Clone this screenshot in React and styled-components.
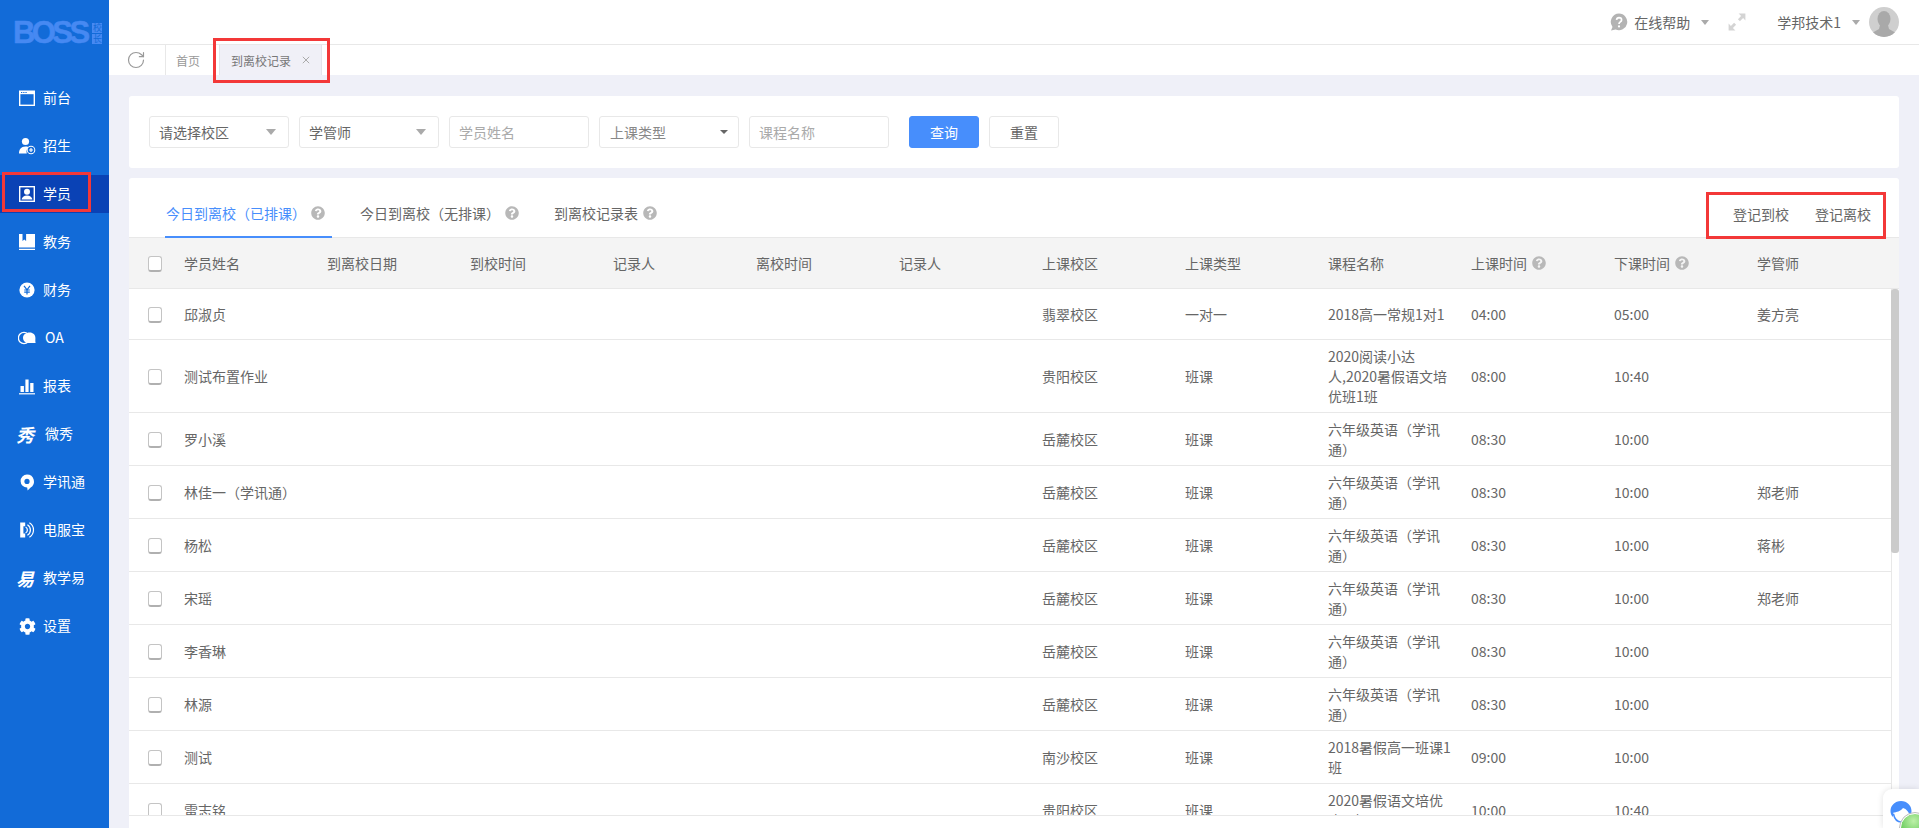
import React from "react";
import styled, { createGlobalStyle } from "styled-components";
import { FaCog, FaQuestionCircle } from "react-icons/fa";
import { RotateCw } from "lucide-react";

const GlobalStyle = createGlobalStyle`
  html, body {
    margin: 0;
    padding: 0;
    height: 100%;
    overflow: hidden;
  }
  body {
    font-family: "Noto Sans CJK SC", "Noto Sans", sans-serif;
    font-size: 14px;
    color: #666;
  }
  * {
    box-sizing: border-box;
  }
`;

const NAV = [
  { key: "front", label: "前台" },
  { key: "enroll", label: "招生" },
  { key: "student", label: "学员", active: true },
  { key: "teach", label: "教务" },
  { key: "money", label: "财务" },
  { key: "oa", label: "OA", shifted: true },
  { key: "report", label: "报表" },
  { key: "show", label: "微秀", shifted: true },
  { key: "xun", label: "学讯通" },
  { key: "phone", label: "电服宝" },
  { key: "easy", label: "教学易" },
  { key: "setting", label: "设置" },
];

const COLUMNS = [
  { label: "学员姓名" },
  { label: "到离校日期" },
  { label: "到校时间" },
  { label: "记录人" },
  { label: "离校时间" },
  { label: "记录人" },
  { label: "上课校区" },
  { label: "上课类型" },
  { label: "课程名称" },
  { label: "上课时间", help: true },
  { label: "下课时间", help: true },
  { label: "学管师" },
];

const XUN = "六年级英语（学讯通）";

const ROWS = [
  ["邱淑贞", "翡翠校区", "一对一", "2018高一常规1对1", "04:00", "05:00", "姜方亮"],
  ["测试布置作业", "贵阳校区", "班课", "2020阅读小达人,2020暑假语文培优班1班", "08:00", "10:40", ""],
  ["罗小溪", "岳麓校区", "班课", XUN, "08:30", "10:00", ""],
  ["林佳一（学讯通）", "岳麓校区", "班课", XUN, "08:30", "10:00", "郑老师"],
  ["杨松", "岳麓校区", "班课", XUN, "08:30", "10:00", "蒋彬"],
  ["宋瑶", "岳麓校区", "班课", XUN, "08:30", "10:00", "郑老师"],
  ["李香琳", "岳麓校区", "班课", XUN, "08:30", "10:00", ""],
  ["林源", "岳麓校区", "班课", XUN, "08:30", "10:00", ""],
  ["测试", "南沙校区", "班课", "2018暑假高一班课1班", "09:00", "10:00", ""],
  ["雷志铭", "贵阳校区", "班课", "2020暑假语文培优班1班", "10:00", "10:40", ""],
];

const Glyph = ({ children }) => (
  <svg width="18" height="18" viewBox="0 0 18 18" fill="none">
    {children}
  </svg>
);

const BLUE = "#126bd8";

const NavIcon = ({ name }) => {
  switch (name) {
    case "front":
      return (
        <Glyph>
          <path d="M1 1.500h16v15.500H1z" fill="#fff" />
          <path d="M2.400 5.200h13.200v10.400H2.400z" fill={BLUE} />
          <path d="M3 3h1.300v1H3zM5.200 3h1.300v1H5.200zM7.400 3h1.300v1H7.400z" fill={BLUE} />
        </Glyph>
      );
    case "enroll":
      return (
        <Glyph>
          <circle cx="7.500" cy="4.500" r="3.600" fill="#fff" />
          <path d="M1 16.500c0-4 2-7 6.500-7 1.600 0 2.800.4 3.700 1a5 5 0 0 0-2.400 6H1z" fill="#fff" />
          <circle cx="13" cy="13" r="4.300" fill="#fff" />
          <circle cx="13" cy="13" r="3.300" fill={BLUE} />
          <path d="M13 11v4M11 13h4" stroke="#fff" strokeWidth="1.200" />
        </Glyph>
      );
    case "student":
      return (
        <Glyph>
          <path d="M1 1h16v16H1z" fill="#fff" />
          <path d="M2.400 2.400h13.200v13.200H2.400z" fill="#0a42b5" />
          <circle cx="9" cy="6.800" r="3" fill="#fff" />
          <path d="M3.600 14.600c.3-2.600 2.200-4.200 5.400-4.200s5.100 1.600 5.400 4.200z" fill="#fff" />
        </Glyph>
      );
    case "teach":
      return (
        <Glyph>
          <path d="M1 1h16v13.600H1zM1 15.800h16V17H1z" fill="#fff" />
          <path d="M4.500 1h3.600v7L6.300 6.400 4.500 8z" fill={BLUE} />
        </Glyph>
      );
    case "money":
      return (
        <Glyph>
          <circle cx="9" cy="9" r="7.600" fill="#fff" />
          <path d="M6 4.800l3 4 3-4M9 8.800v4.600M6.200 9h5.600M6.200 11.200h5.600" stroke={BLUE} strokeWidth="1.200" />
        </Glyph>
      );
    case "oa":
      return (
        <Glyph>
          <circle cx="6" cy="9" r="5.600" stroke="#fff" strokeWidth="1.300" />
          <path d="M11.800 3.600c3.200 0 5.600 2.300 5.600 5.300 0 1.400-.2 3.300.2 5H8.600C6.500 12.900 5 11.200 5 9c0-3 2.800-5.400 6.800-5.400z" fill="#fff" />
        </Glyph>
      );
    case "report":
      return (
        <Glyph>
          <path d="M2.500 9h3.400v6H2.500zM7.400 2.500h3.200V15H7.400zM12.200 6h3.300v9h-3.300z" fill="#fff" />
          <path d="M1 16.200h16v1.200H1z" fill="#fff" />
        </Glyph>
      );
    case "xun":
      return (
        <Glyph>
          <path d="M9 1.600a7 7 0 0 1 3.400 13.100L9.600 17.400l-.4-2.800A6.500 6.500 0 0 1 9 1.600z" fill="#fff" />
          <circle cx="9" cy="8.400" r="2.600" fill={BLUE} />
        </Glyph>
      );
    case "phone":
      return (
        <Glyph>
          <path d="M2.200 1.600h5v3.600H5.400v7.400h1.800v3.800h-5z" fill="#fff" />
          <path d="M7.600 6a3.400 3.400 0 0 1 0 6" stroke="#fff" strokeWidth="1.200" />
          <path d="M9.400 3.800a6 6 0 0 1 0 10.400" stroke="#fff" strokeWidth="1.200" />
          <path d="M11.400 1.800a8.400 8.400 0 0 1 0 14.400" stroke="#fff" strokeWidth="1.200" />
        </Glyph>
      );
    case "setting":
      return <FaCog size={17} color="#fff" />;
    default:
      return null;
  }
};

const HelpBubble = () => (
  <svg width="18" height="18" viewBox="0 0 18 18">
    <path d="M9 .6a8.300 8.300 0 1 1-3.400 15.900L1 17.600l1.500-3.700A8.300 8.300 0 0 1 9 .6z" fill="#b3b3b3" />
    <path d="M6.500 6.800A2.600 2.600 0 0 1 9 4.600c1.500 0 2.600 1 2.600 2.300 0 2-2.600 2-2.600 4" fill="none" stroke="#fff" strokeWidth="1.700" />
    <circle cx="9" cy="13.400" r="1.100" fill="#fff" />
  </svg>
);

const ExpandIcon = () => (
  <svg width="18" height="18" viewBox="0 0 18 18" fill="#d4d4d4">
    <path d="M10.600.6h6.800v6.800l-2.300-2.300-3.200 3.200-2-2 3.200-3.200zM7.400 17.400H.6v-6.800l2.300 2.300 3.200-3.200 2 2-3.200 3.200z" />
  </svg>
);

const Caret = styled.i`
  display: block;
  width: 0;
  height: 0;
  flex: none;
  border-left: ${(p) => (p.$small ? 4 : 5)}px solid transparent;
  border-right: ${(p) => (p.$small ? 4 : 5)}px solid transparent;
  border-top: ${(p) => (p.$small ? 4 : 6)}px solid ${(p) => (p.$dark ? "#666" : "#aaa")};
`;

const TopCaret = styled(Caret)`
  border-left-width: 4.5px;
  border-right-width: 4.5px;
  border-top-width: 5px;
  margin-left: ${(p) => p.$offset || 0}px;
`;

const Page = styled.div`
  display: flex;
  width: 100%;
  height: 100vh;
  overflow: hidden;
  background: #eff0f8;
`;

const Sidebar = styled.aside`
  width: 109px;
  flex: none;
  background: ${BLUE};
`;

const Logo = styled.div`
  display: flex;
  height: 79px;
  padding: 15px 0 0 13px;
`;

const LogoWord = styled.span`
  font-family: "Liberation Sans", Arial, sans-serif;
  font-weight: 700;
  font-size: 31px;
  line-height: 36px;
  letter-spacing: -3.6px;
  color: #4689f2;
  -webkit-text-stroke: 0.5px #4689f2;
`;

const LogoMarks = styled.span`
  display: flex;
  flex-direction: column;
  gap: 1px;
  margin: 8px 0 0 6px;
`;

const LogoMark = styled.span`
  width: 10px;
  height: 10px;
  background: #4689f2;
  color: ${BLUE};
  font-size: 9px;
  line-height: 10px;
  text-align: center;
`;

const NavList = styled.nav`
  display: flex;
  flex-direction: column;
  gap: 10px;
`;

const NavItem = styled.a`
  position: relative;
  display: flex;
  align-items: center;
  height: 38px;
  padding-left: 18px;
  gap: ${(p) => (p.$shifted ? 9 : 7)}px;
  color: #fff;
  background: ${(p) => (p.$active ? "#0a42b5" : "transparent")};
`;

const NavLabel = styled.span`
  padding-bottom: 2px;
`;

const NavIconBox = styled.span`
  display: flex;
  align-items: center;
  justify-content: center;
  width: 18px;
  height: 18px;
`;

const NavCharIcon = styled.span`
  font-size: 18px;
  font-weight: 700;
  line-height: 18px;
  color: #fff;
  transform: skewX(-14deg);
`;

const RedBox = styled.span`
  position: absolute;
  z-index: 5;
  border: 3px solid #f33838;
  pointer-events: none;
`;

const NavRedBox = styled(RedBox)`
  top: -3px;
  left: 2px;
  width: 89px;
  height: 40px;
`;

const TabRedBox = styled(RedBox)`
  top: -7px;
  left: -7px;
  width: 117px;
  height: 45px;
`;

const ActionRedBox = styled(RedBox)`
  top: 2px;
  left: -27px;
  width: 180px;
  height: 47px;
`;

const Main = styled.div`
  flex: 1;
  min-width: 0;
  display: flex;
  flex-direction: column;
`;

const TopBar = styled.header`
  display: flex;
  align-items: center;
  justify-content: flex-end;
  height: 45px;
  padding-right: 20px;
  background: #fff;
  border-bottom: 1px solid #e8e8e8;
`;

const TopItem = styled.div`
  display: flex;
  align-items: center;
  gap: ${(p) => p.$gap || 0}px;
`;

const HelpGroup = styled(TopItem)`
  margin-right: 19px;
`;

const ExpandBox = styled.span`
  display: flex;
  margin-right: 31px;
`;

const Avatar = styled.span`
  display: block;
  width: 30px;
  height: 30px;
  border-radius: 50%;
  overflow: hidden;
  background: #cfcfcf;
`;

const TabBar = styled.div`
  display: flex;
  gap: 9px;
  height: 30px;
  background: #fff;
`;

const RefreshCell = styled.div`
  display: flex;
  align-items: center;
  justify-content: center;
  width: 57px;
  padding-right: 2px;
  color: #999;
  border-right: 1px solid #e8e8e8;
`;

const PageTab = styled.div`
  position: relative;
  display: flex;
  align-items: center;
  gap: 11px;
  padding: 0 ${(p) => (p.$active ? 11 : 10)}px;
  margin-left: ${(p) => (p.$active ? 0 : -9)}px;
  font-size: 12px;
  color: ${(p) => (p.$active ? "#777" : "#999")};
  background: ${(p) => (p.$active ? "#f0f0f7" : "#fff")};
  border-right: ${(p) => (p.$active ? "1px solid #e4e4ea" : "none")};
  border-left: ${(p) => (p.$active ? "1px solid #e4e4ea" : "none")};
`;

const Content = styled.main`
  flex: 1;
  min-height: 0;
  display: flex;
  flex-direction: column;
  gap: 10px;
  padding: 21px 20px 0;
`;

const FilterCard = styled.section`
  display: flex;
  gap: 10px;
  height: 72px;
  padding: 20px;
  background: #fff;
  border-radius: 3px;
`;

const Field = styled.div`
  display: flex;
  align-items: center;
  justify-content: space-between;
  width: 140px;
  height: 32px;
  padding: 0 ${(p) => (p.$dark ? 10 : 12)}px 0 ${(p) => (p.$dark ? 10 : 9)}px;
  border: 1px solid #e8e8e8;
  border-radius: 3px;
  color: ${(p) => (p.$muted ? "#888" : "#666")};
`;

const TextField = styled.input`
  width: 140px;
  height: 32px;
  padding: 0 9px;
  border: 1px solid #e8e8e8;
  border-radius: 3px;
  outline: none;
  font: inherit;
  color: #666;
  &::placeholder {
    color: #aaa;
    opacity: 1;
  }
`;

const Button = styled.button`
  width: 70px;
  height: 32px;
  padding: 0;
  font: inherit;
  border-radius: 3px;
  border: 1px solid ${(p) => (p.$primary ? "#478efc" : "#e8e8e8")};
  background: ${(p) => (p.$primary ? "#478efc" : "#fff")};
  color: ${(p) => (p.$primary ? "#fff" : "#666")};
  margin-left: ${(p) => (p.$primary ? 10 : 0)}px;
`;

const TableCard = styled.section`
  flex: 1;
  min-height: 0;
  display: flex;
  flex-direction: column;
  background: #fff;
  border-radius: 3px 3px 0 0;
`;

const TabsRow = styled.div`
  flex: none;
  display: flex;
  justify-content: space-between;
  height: 60px;
  padding: 12px 28px 0 36px;
  border-bottom: 1px solid #e8e8e8;
`;

const Tabs = styled.div`
  display: flex;
  gap: 27px;
`;

const Tab = styled.div`
  display: flex;
  align-items: center;
  gap: 5px;
  height: 48px;
  padding: 0 7px 0 1px;
  color: ${(p) => (p.$active ? "#478efc" : "#666")};
  border-bottom: 2px solid ${(p) => (p.$active ? "#478efc" : "transparent")};
`;

const HelpDot = styled(FaQuestionCircle)`
  flex: none;
  width: 14px;
  height: 14px;
  color: #b8b8b8;
`;

const Actions = styled.div`
  position: relative;
  display: flex;
  align-items: center;
  gap: 26px;
  height: 47px;
`;

const TableGrid = styled.div`
  display: grid;
  grid-template-columns: 46px repeat(12, 143px);
  align-items: center;
`;

const HeadRow = styled(TableGrid)`
  flex: none;
  height: 51px;
  background: #f4f4f4;
  border-bottom: 1px solid #e8e8e8;
`;

const BodyWrap = styled.div`
  flex: 1;
  min-height: 0;
  display: flex;
  margin-bottom: 12px;
  overflow: hidden;
  border-bottom: 1px solid #e8e8e8;
`;

const BodyRows = styled.div`
  width: 1762px;
  flex: none;
`;

const BodyRow = styled(TableGrid)`
  min-height: 51px;
  padding: 6px 0;
  border-bottom: 1px solid #e8e8e8;
`;

const CheckCell = styled.div`
  display: flex;
  padding: 1px 0 0 19px;
`;

const CheckBox = styled.span`
  display: block;
  width: 14px;
  height: 16px;
  background: #fff;
  border: 1px solid #c4c4c4;
  border-bottom: 2px solid #b0b0b0;
  border-radius: 3px;
`;

const Cell = styled.div`
  display: flex;
  align-items: center;
  gap: 5px;
  padding: 0 10px 0 9px;
  line-height: 20px;
  grid-column: ${(p) => p.$column || "auto"};
`;

const Track = styled.div`
  flex: 1;
  border-left: 1px solid #e8e8e8;
`;

const Thumb = styled.div`
  width: 8px;
  height: 264px;
  margin-left: -1px;
  background: #cbcbcb;
  border-radius: 3px;
`;

const ChatWidget = styled.div`
  position: fixed;
  right: 0;
  bottom: 0;
  width: 36px;
  height: 39px;
  overflow: hidden;
  background: #fff;
  border-radius: 9px 0 0 0;
  box-shadow: 0 0 6px rgba(0, 0, 0, 0.12);
`;

const ChatFace = styled.svg`
  display: block;
  margin: 12px 0 0 7px;
`;

const ChatBall = styled.span`
  position: absolute;
  left: 17px;
  top: 24px;
  width: 30px;
  height: 30px;
  border-radius: 50%;
  border: 1px solid #fff;
  outline: 1px solid #bbb;
  background: radial-gradient(circle at 45% 25%, #bdf0a8, #55c24a 70%);
`;

const App = () => {
  return (
    <Page>
      <GlobalStyle />
      <Sidebar>
        <Logo>
          <LogoWord>BOSS</LogoWord>
          <LogoMarks>
            <LogoMark>校</LogoMark>
            <LogoMark>长</LogoMark>
          </LogoMarks>
        </Logo>
        <NavList>
          {NAV.map((item) => (
            <NavItem key={item.key} $active={item.active} $shifted={item.shifted}>
              <NavIconBox>
                {item.key === "show" && <NavCharIcon>秀</NavCharIcon>}
                {item.key === "easy" && <NavCharIcon>易</NavCharIcon>}
                <NavIcon name={item.key} />
              </NavIconBox>
              <NavLabel>{item.label}</NavLabel>
              {item.active && <NavRedBox />}
            </NavItem>
          ))}
        </NavList>
      </Sidebar>

      <Main>
        <TopBar>
          <HelpGroup $gap={6}>
            <HelpBubble />
            在线帮助
            <TopCaret $offset={5} />
          </HelpGroup>
          <ExpandBox>
            <ExpandIcon />
          </ExpandBox>
          <TopItem $gap={9}>
            学邦技术1
            <TopCaret $offset={2} />
            <Avatar>
              <svg width="30" height="30" viewBox="0 0 30 30">
                <ellipse cx="15" cy="12" rx="6.500" ry="8" fill="#a9a9a9" />
                <path d="M11 18h8l1 4 7 4v4H3v-4l7-4z" fill="#a9a9a9" />
              </svg>
            </Avatar>
          </TopItem>
        </TopBar>

        <TabBar>
          <RefreshCell>
            <RotateCw size={20} strokeWidth={1.400} />
          </RefreshCell>
          <PageTab>首页</PageTab>
          <PageTab $active>
            到离校记录
            <svg width="8" height="8" viewBox="0 0 8 8">
              <path d="M.8.8l6.400 6.400M7.200.8L.8 7.200" stroke="#aaa" strokeWidth="1" />
            </svg>
            <TabRedBox />
          </PageTab>
        </TabBar>

        <Content>
          <FilterCard>
            <Field>
              请选择校区
              <Caret />
            </Field>
            <Field>
              学管师
              <Caret />
            </Field>
            <TextField placeholder="学员姓名" />
            <Field $muted $dark>
              上课类型
              <Caret $dark $small />
            </Field>
            <TextField placeholder="课程名称" />
            <Button $primary>查询</Button>
            <Button>重置</Button>
          </FilterCard>

          <TableCard>
            <TabsRow>
              <Tabs>
                <Tab $active>
                  今日到离校（已排课）
                  <HelpDot />
                </Tab>
                <Tab>
                  今日到离校（无排课）
                  <HelpDot />
                </Tab>
                <Tab>
                  到离校记录表
                  <HelpDot />
                </Tab>
              </Tabs>
              <Actions>
                <span>登记到校</span>
                <span>登记离校</span>
                <ActionRedBox />
              </Actions>
            </TabsRow>

            <HeadRow>
              <CheckCell>
                <CheckBox />
              </CheckCell>
              {COLUMNS.map((col, i) => (
                <Cell key={i}>
                  {col.label}
                  {col.help && <HelpDot />}
                </Cell>
              ))}
            </HeadRow>

            <BodyWrap>
              <BodyRows>
                {ROWS.map(([name, campus, type, course, start, end, manager]) => (
                  <BodyRow key={name}>
                    <CheckCell>
                      <CheckBox />
                    </CheckCell>
                    <Cell $column="2 / span 2">{name}</Cell>
                    <Cell $column="8">{campus}</Cell>
                    <Cell>{type}</Cell>
                    <Cell>{course}</Cell>
                    <Cell>{start}</Cell>
                    <Cell>{end}</Cell>
                    <Cell>{manager}</Cell>
                  </BodyRow>
                ))}
              </BodyRows>
              <Track>
                <Thumb />
              </Track>
            </BodyWrap>
          </TableCard>
        </Content>
      </Main>

      <ChatWidget>
        <ChatFace width="22" height="24" viewBox="0 0 22 24">
          <path d="M11 0c6 0 10.500 4.500 10.500 10 0 2-.6 3.600-1.500 5-1-4-3.500-7-7-8-2 3-7 4.500-9.500 4.500L3 16C1.200 14.500.5 12 .5 10 .5 4.500 5 0 11 0z" fill="#478efc" />
          <path d="M3.500 13c1 5 4 8 8 8" fill="none" stroke="#478efc" strokeWidth="1.500" />
        </ChatFace>
        <ChatBall />
      </ChatWidget>
    </Page>
  );
};

export default App;
